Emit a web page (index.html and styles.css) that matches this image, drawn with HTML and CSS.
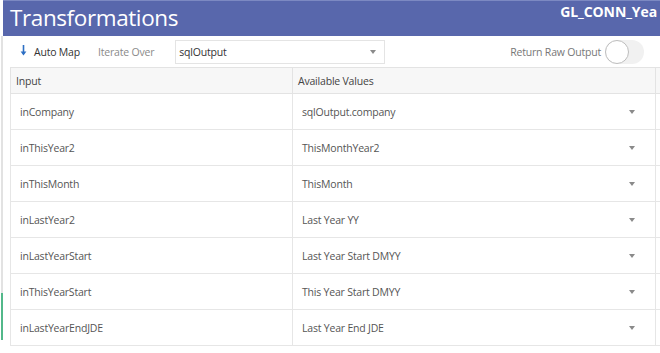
FILE: index.html
```html
<!DOCTYPE html>
<html lang="en">
<head>
    <meta charset="UTF-8">
    <meta name="viewport" content="width=device-width, initial-scale=1.0">
    <title>Transformations</title>
    <link rel="stylesheet" href="styles.css">
</head>
<body>
<div class="shell">
    <div class="rail">
        <div class="rail-gray"></div>
        <div class="rail-green"></div>
    </div>

    <div class="panel">
        <header class="topbar">
            <h1 class="title">Transformations</h1>
            <div class="conn">GL_CONN_Yea</div>
        </header>

        <div class="toolbar">
            <div class="automap">
                <svg class="arrow" width="7" height="11" viewBox="0 0 7 11">
                    <path d="M3.5 0 V9" stroke="#2d6fc4" stroke-width="1.6" fill="none"/>
                    <path d="M0.6 6.5 L3.5 10.5 L6.4 6.5 Z" fill="#2d6fc4"/>
                </svg>
                <span>Auto Map</span>
            </div>
            <span class="iter-label">Iterate Over</span>
            <div class="select">
                <span>sqlOutput</span>
                <span class="caret"></span>
            </div>
            <div class="raw">
                <span>Return Raw Output</span>
                <div class="toggle"><div class="knob"></div></div>
            </div>
        </div>

        <table class="grid">
            <thead>
                <tr>
                    <th class="col-in">Input</th>
                    <th class="col-val">Available Values</th>
                    <th class="col-x"></th>
                </tr>
            </thead>
            <tbody>
                <tr><td>inCompany</td><td><div class="pick"><span>sqlOutput.company</span><span class="caret"></span></div></td><td></td></tr>
                <tr><td>inThisYear2</td><td><div class="pick"><span>ThisMonthYear2</span><span class="caret"></span></div></td><td></td></tr>
                <tr><td>inThisMonth</td><td><div class="pick"><span>ThisMonth</span><span class="caret"></span></div></td><td></td></tr>
                <tr><td>inLastYear2</td><td><div class="pick"><span>Last Year YY</span><span class="caret"></span></div></td><td></td></tr>
                <tr><td>inLastYearStart</td><td><div class="pick"><span>Last Year Start DMYY</span><span class="caret"></span></div></td><td></td></tr>
                <tr><td>inThisYearStart</td><td><div class="pick"><span>This Year Start DMYY</span><span class="caret"></span></div></td><td></td></tr>
                <tr><td>inLastYearEndJDE</td><td><div class="pick"><span>Last Year End JDE</span><span class="caret"></span></div></td><td></td></tr>
            </tbody>
        </table>
    </div>
</div>
</body>
</html>
```

FILE: styles.css
```css
*{
    margin: 0;
    padding: 0;
    box-sizing: border-box;
}
body{
    font-family: "Open Sans", "Noto Sans", sans-serif;
    font-size: 10.5px;
    letter-spacing: -0.2px;
    color: #444;
    background: #fff;
    overflow: hidden;
    width: 660px;
    height: 353px;
}
.shell{
    display: flex;
    height: 353px;
}
.rail{
    width: 3px;
    flex-shrink: 0;
    display: flex;
    flex-direction: column;
    padding-top: 36px;
}
.rail-gray{
    height: 257px;
    width: 2px;
    margin-left: 1px;
    background: #e2e2e2;
}
.rail-green{
    height: 47px;
    width: 2px;
    margin-left: 1px;
    background: #52b88a;
}
.panel{
    flex: 1;
    min-width: 0;
}
.topbar{
    height: 36px;
    background: #5867ac;
    border-top: 1px solid #7c89c2;
    display: flex;
    justify-content: space-between;
    align-items: flex-start;
    padding-left: 7px;
    white-space: nowrap;
    overflow: hidden;
}
.title{
    color: #fff;
    font-weight: 400;
    font-size: 22.5px;
    line-height: 33px;
    letter-spacing: -0.4px;
}
.conn{
    color: #fff;
    font-weight: 700;
    font-size: 14px;
    letter-spacing: -0.1px;
    margin-top: 1px;
    margin-right: 3px;
}
.toolbar{
    height: 31px;
    display: flex;
    align-items: center;
    padding-left: 17px;
}
.automap{
    display: flex;
    align-items: center;
    gap: 7px;
    color: #333;
}
.arrow{
    margin-top: -3px;
}
.iter-label{
    color: #8a8a8a;
    margin-left: 18px;
}
.select{
    margin-left: 21px;
    width: 210px;
    height: 24px;
    border: 1px solid #e4e4e4;
    display: flex;
    align-items: center;
    justify-content: space-between;
    padding: 0 8px 0 3px;
    color: #333;
}
.caret{
    width: 0;
    height: 0;
    border-left: 3.5px solid transparent;
    border-right: 3.5px solid transparent;
    border-top: 4px solid #8a8a8a;
}
.raw{
    margin-left: auto;
    display: flex;
    align-items: center;
    gap: 4px;
    color: #777;
    margin-right: 16px;
}
.toggle{
    width: 39px;
    height: 24px;
    border-radius: 12px;
    background: #f1f1f1;
    position: relative;
}
.knob{
    position: absolute;
    left: 0;
    top: 0;
    width: 24px;
    height: 24px;
    border-radius: 50%;
    background: #fff;
    border: 1.5px solid #bdbdbd;
}
.grid{
    margin-left: 7px;
    border-collapse: collapse;
    table-layout: fixed;
    width: 700px;
}
.grid th{
    height: 26px;
    text-align: left;
    font-weight: 400;
    color: #444;
    background: #f7f7f7;
    border: 1px solid #e3e3e3;
    padding-left: 5px;
}
.grid td{
    height: 36px;
    border: 1px solid #e6e6e6;
    padding-left: 9px;
    color: #555;
}
.col-in{
    width: 282px;
}
.col-val{
    width: 363px;
}
.pick{
    display: flex;
    align-items: center;
    justify-content: space-between;
    padding-right: 20px;
}
```
